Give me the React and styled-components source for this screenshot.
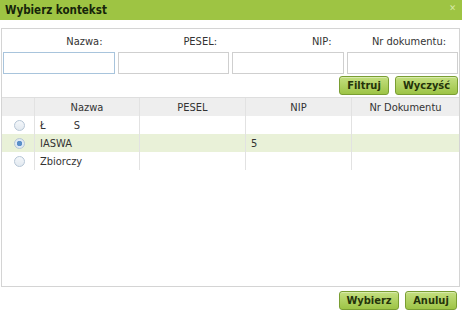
import React from "react";
import styled, { createGlobalStyle } from "styled-components";

const Global = createGlobalStyle`
  html, body { margin: 0; padding: 0; background: #fff; }
  body { font-family: "DejaVu Sans Condensed", "DejaVu Sans", sans-serif; font-size: 11px; color: #333; }
`;

const Dialog = styled.div`
  width: 462px;
  height: 311px;
  display: flex;
  flex-direction: column;
  background: #fff;
  box-sizing: border-box;
`;

const TitleBar = styled.div`
  height: 20px;
  background: #9ec443;
  display: flex;
  align-items: center;
  justify-content: space-between;
  padding: 0 6px 0 5px;
  flex-shrink: 0;
`;

const Title = styled.span`
  font-weight: bold;
  font-size: 11.5px;
  color: #16240a;
`;

const Close = styled.span`
  font-size: 9px;
  color: #d6e8a8;
  margin-top: -4px;
`;

const Body = styled.div`
  flex: 1;
  display: flex;
  flex-direction: column;
  padding: 8px 2px 0 1px;
`;

const Panel = styled.div`
  flex: 1;
  border: 1px solid #d4d4d4;
  display: flex;
  flex-direction: column;
`;

const FilterGrid = styled.div`
  display: grid;
  grid-template-columns: repeat(4, 1fr);
  column-gap: 3px;
  padding: 0 1px 0 1px;
`;

const Label = styled.div`
  text-align: right;
  padding: 6px 12px 0 0;
  height: 17px;
  color: #333;
`;

const Input = styled.input`
  height: 22px;
  box-sizing: border-box;
  border: 1px solid ${p => (p.$focus ? "#a8c4dc" : "#cfcfcf")};
  background: #fff;
  margin: 0;
  width: 100%;
`;

const ButtonRow = styled.div`
  display: flex;
  justify-content: flex-end;
  gap: 6px;
  padding: 2px 1px 2px 0;
`;

const Button = styled.button`
  height: 19px;
  width: ${p => p.$w}px;
  padding: 0;
  border: 1px solid #7a9e33;
  border-radius: 3px;
  background: linear-gradient(#c4df80, #9dc446);
  font-family: "DejaVu Sans Condensed", "DejaVu Sans", sans-serif;
  font-weight: bold;
  font-size: 11px;
  color: #24330a;
  box-shadow: inset 0 1px 0 #d8ebab;
  cursor: pointer;
`;

const Table = styled.div`
  flex: 1;
  display: flex;
  flex-direction: column;
`;

const Row = styled.div`
  display: grid;
  grid-template-columns: 32px 105px 106px 106px 1fr;
  height: 18px;
  background: ${p => (p.$head ? "#eeeeee" : p.$sel ? "#e9f1d8" : "#fff")};
  border-top: ${p => (p.$head ? "1px solid #dedede" : "none")};
`;

const Cell = styled.div`
  border-left: ${p => (p.$first ? "none" : "1px solid #e2e2e2")};
  display: flex;
  align-items: center;
  justify-content: ${p => (p.$center ? "center" : "flex-start")};
  padding-left: ${p => (p.$center ? 0 : 5)}px;
  white-space: pre;
  color: #333;
`;

const Radio = styled.span`
  width: 9px;
  height: 9px;
  border-radius: 50%;
  border: 1px solid #b6c6d6;
  background: ${p => (p.$on ? "radial-gradient(circle, #5a8fc8 0 2.5px, #dfe9f3 3px)" : "linear-gradient(#f4f7fa, #e2e9f0)")};
  margin-left: 2px;
`;

const Footer = styled.div`
  display: flex;
  justify-content: flex-end;
  gap: 6px;
  padding: 4px 3px 1px 0;
  height: 19px;
`;

const rows = [
  { name: "Ł         S", nip: "" },
  { name: "IASWA", nip: "5", sel: true },
  { name: "Zbiorczy", nip: "" },
];

export default function App() {
  return (
    <>
      <Global />
      <Dialog>
        <TitleBar>
          <Title>Wybierz kontekst</Title>
          <Close>✕</Close>
        </TitleBar>
        <Body>
          <Panel>
            <FilterGrid>
              <Label>Nazwa:</Label>
              <Label>PESEL:</Label>
              <Label>NIP:</Label>
              <Label>Nr dokumentu:</Label>
              <Input $focus />
              <Input />
              <Input />
              <Input />
            </FilterGrid>
            <ButtonRow>
              <Button $w={50}>Filtruj</Button>
              <Button $w={63}>Wyczyść</Button>
            </ButtonRow>
            <Table>
              <Row $head>
                <Cell $first $center />
                <Cell $center>Nazwa</Cell>
                <Cell $center>PESEL</Cell>
                <Cell $center>NIP</Cell>
                <Cell $center>Nr Dokumentu</Cell>
              </Row>
              {rows.map((r, i) => (
                <Row key={i} $sel={r.sel}>
                  <Cell $first $center><Radio $on={r.sel} /></Cell>
                  <Cell>{r.name}</Cell>
                  <Cell />
                  <Cell>{r.nip}</Cell>
                  <Cell />
                </Row>
              ))}
            </Table>
          </Panel>
          <Footer>
            <Button $w={60}>Wybierz</Button>
            <Button $w={52}>Anuluj</Button>
          </Footer>
        </Body>
      </Dialog>
    </>
  );
}
